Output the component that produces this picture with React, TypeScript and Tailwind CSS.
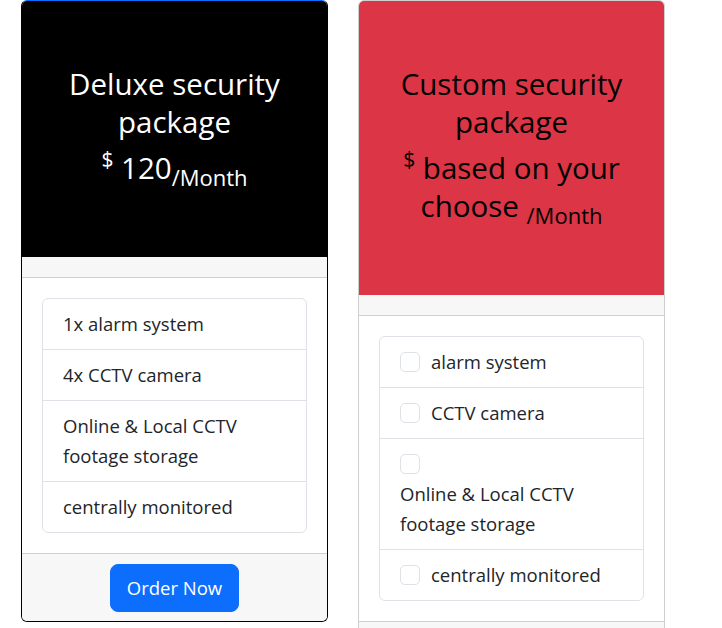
import { ReactNode } from "react";

const font = { fontFamily: '"Open Sans", "Noto Sans", sans-serif' };

type Item = { text: string; stacked?: boolean };

const deluxeItems: Item[] = [
  { text: "1x alarm system" },
  { text: "4x CCTV camera" },
  { text: "Online & Local CCTV footage storage" },
  { text: "centrally monitored" },
];

const customItems: Item[] = [
  { text: "alarm system" },
  { text: "CCTV camera" },
  { text: "Online & Local CCTV footage storage", stacked: true },
  { text: "centrally monitored" },
];

const Checkbox = () => (
  <span className="inline-block w-[20px] h-[20px] mt-[5px] align-top border border-[#dee2e6] rounded-[5px] bg-white" />
);

const ListGroup = ({ items, checks }: { items: Item[]; checks?: boolean }) => (
  <ul className="border border-[#dee2e6] rounded-[6px] text-[18.5px] leading-[30px] text-[#212529]">
    {items.map((item, i) => (
      <li
        key={item.text}
        className={`px-[20px] py-[10px] ${i < items.length - 1 ? "border-b border-[#dee2e6]" : ""}`}
      >
        {checks && item.stacked ? (
          <>
            <div className="h-[30px]">
              <Checkbox />
            </div>
            <div>{item.text}</div>
          </>
        ) : checks ? (
          <div className="flex">
            <Checkbox />
            <span className="ml-[11px]">{item.text}</span>
          </div>
        ) : (
          item.text
        )}
      </li>
    ))}
  </ul>
);

const Card = ({
  header,
  items,
  checks,
  cardClass,
  headClass,
}: {
  header: ReactNode;
  items: Item[];
  checks?: boolean;
  cardClass: string;
  headClass: string;
}) => (
  <div className={`w-[307px] shrink-0 border rounded-[6px] overflow-hidden bg-white ${cardClass}`}>
    <div className={`text-center px-[20px] pt-[64px] pb-[70px] ${headClass}`}>{header}</div>
    <div className="h-[21px] bg-[#f7f7f7] border-b border-[#d0d0d0]" />
    <div className="p-[20px]">
      <ListGroup items={items} checks={checks} />
    </div>
    <div className="border-t border-[#d0d0d0] bg-[#f7f7f7] pt-[10px] pb-[9px] flex justify-center">
      <button className="bg-[#0d6efd] text-white text-[18.5px] leading-[30px] px-[16px] py-[8px] rounded-[8px] border border-[#0d6efd]">
        Order Now
      </button>
    </div>
  </div>
);

export default function App() {
  return (
    <div className="min-h-screen bg-white" style={font}>
      <div className="flex items-start gap-[30px] pl-[21px]">
        <Card
          cardClass="border-black border-t-[#0d6efd]"
          headClass="bg-black text-white"
          items={deluxeItems}
          header={
            <>
              <h1 className="text-[29.5px] leading-[38px] mb-[8px]">Deluxe security package</h1>
              <h1 className="text-[29.5px] leading-[38px]">
                <sup className="text-[21px] relative -top-[12px] align-baseline">$</sup>{" "}
                120
                <sub className="text-[22px] relative top-[7px] align-baseline">/Month</sub>
              </h1>
            </>
          }
        />
        <Card
          cardClass="border-[#cfcfcf]"
          headClass="bg-[#dc3545] text-black"
          items={customItems}
          checks
          header={
            <>
              <h1 className="text-[29.5px] leading-[38px] mb-[8px]">Custom security package</h1>
              <h1 className="text-[29.5px] leading-[38px]">
                <sup className="text-[21px] relative -top-[12px] align-baseline">$</sup>{" "}
                based on your choose{" "}
                <sub className="text-[22px] relative top-[7px] align-baseline">/Month</sub>
              </h1>
            </>
          }
        />
      </div>
    </div>
  );
}
